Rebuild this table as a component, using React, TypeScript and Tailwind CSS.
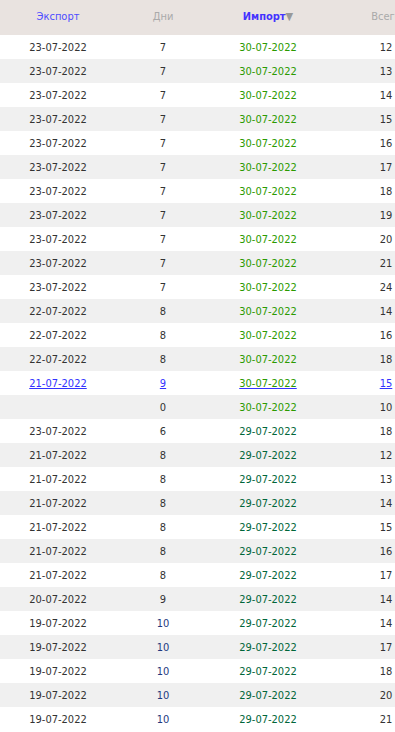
import React from "react";

type Row = { e: string; d: string; i: string; t: string; link?: boolean };

const rows: Row[] = [
  { e: "23-07-2022", d: "7", i: "30-07-2022", t: "12" },
  { e: "23-07-2022", d: "7", i: "30-07-2022", t: "13" },
  { e: "23-07-2022", d: "7", i: "30-07-2022", t: "14" },
  { e: "23-07-2022", d: "7", i: "30-07-2022", t: "15" },
  { e: "23-07-2022", d: "7", i: "30-07-2022", t: "16" },
  { e: "23-07-2022", d: "7", i: "30-07-2022", t: "17" },
  { e: "23-07-2022", d: "7", i: "30-07-2022", t: "18" },
  { e: "23-07-2022", d: "7", i: "30-07-2022", t: "19" },
  { e: "23-07-2022", d: "7", i: "30-07-2022", t: "20" },
  { e: "23-07-2022", d: "7", i: "30-07-2022", t: "21" },
  { e: "23-07-2022", d: "7", i: "30-07-2022", t: "24" },
  { e: "22-07-2022", d: "8", i: "30-07-2022", t: "14" },
  { e: "22-07-2022", d: "8", i: "30-07-2022", t: "16" },
  { e: "22-07-2022", d: "8", i: "30-07-2022", t: "18" },
  { e: "21-07-2022", d: "9", i: "30-07-2022", t: "15", link: true },
  { e: "", d: "0", i: "30-07-2022", t: "10" },
  { e: "23-07-2022", d: "6", i: "29-07-2022", t: "18" },
  { e: "21-07-2022", d: "8", i: "29-07-2022", t: "12" },
  { e: "21-07-2022", d: "8", i: "29-07-2022", t: "13" },
  { e: "21-07-2022", d: "8", i: "29-07-2022", t: "14" },
  { e: "21-07-2022", d: "8", i: "29-07-2022", t: "15" },
  { e: "21-07-2022", d: "8", i: "29-07-2022", t: "16" },
  { e: "21-07-2022", d: "8", i: "29-07-2022", t: "17" },
  { e: "20-07-2022", d: "9", i: "29-07-2022", t: "14" },
  { e: "19-07-2022", d: "10", i: "29-07-2022", t: "14" },
  { e: "19-07-2022", d: "10", i: "29-07-2022", t: "17" },
  { e: "19-07-2022", d: "10", i: "29-07-2022", t: "18" },
  { e: "19-07-2022", d: "10", i: "29-07-2022", t: "20" },
  { e: "19-07-2022", d: "10", i: "29-07-2022", t: "21" },
];

const grid = "grid grid-cols-[116px_94px_116px_120px] w-[446px]";

export default function App() {
  return (
    <div
      className="w-[395px] h-[732px] overflow-hidden bg-white text-[11px]"
      style={{ fontFamily: '"DejaVu Sans Condensed", "Liberation Sans", sans-serif' }}
    >
      <div className={`${grid} h-[35px] items-center bg-[#e9e3e0]`}>
        <div className="text-center text-[#4d4dff]">Экспорт</div>
        <div className="text-center text-[#aaaaaa]">Дни</div>
        <div className="text-center font-bold text-[#4433ff]">
          Импорт<span className="text-[#999999] font-normal">▼</span>
        </div>
        <div className="text-center text-[#aaaaaa]">Всего</div>
      </div>
      {rows.map((r, idx) => {
        const bg = idx % 2 === 0 ? "bg-white" : "bg-[#f0f0f0]";
        const green = r.i.startsWith("30") ? "text-[#2b9a00]" : "text-[#00663a]";
        const dColor = r.d === "10" ? "text-[#1f3a80]" : "text-[#333333]";
        if (r.link) {
          return (
            <div key={idx} className={`${grid} h-[24px] items-center pt-[2px] ${bg}`}>
              <div className="text-center text-[#3333ff] underline">{r.e}</div>
              <div className="text-center text-[#3333ff] underline">{r.d}</div>
              <div className={`text-center ${green} underline decoration-[#3333ff]`}>{r.i}</div>
              <div className="text-center text-[#3333ff] underline">{r.t}</div>
            </div>
          );
        }
        return (
          <div key={idx} className={`${grid} h-[24px] items-center pt-[2px] ${bg}`}>
            <div className="text-center text-[#333333]">{r.e}</div>
            <div className={`text-center ${dColor}`}>{r.d}</div>
            <div className={`text-center ${green}`}>{r.i}</div>
            <div className="text-center text-[#333333]">{r.t}</div>
          </div>
        );
      })}
    </div>
  );
}
